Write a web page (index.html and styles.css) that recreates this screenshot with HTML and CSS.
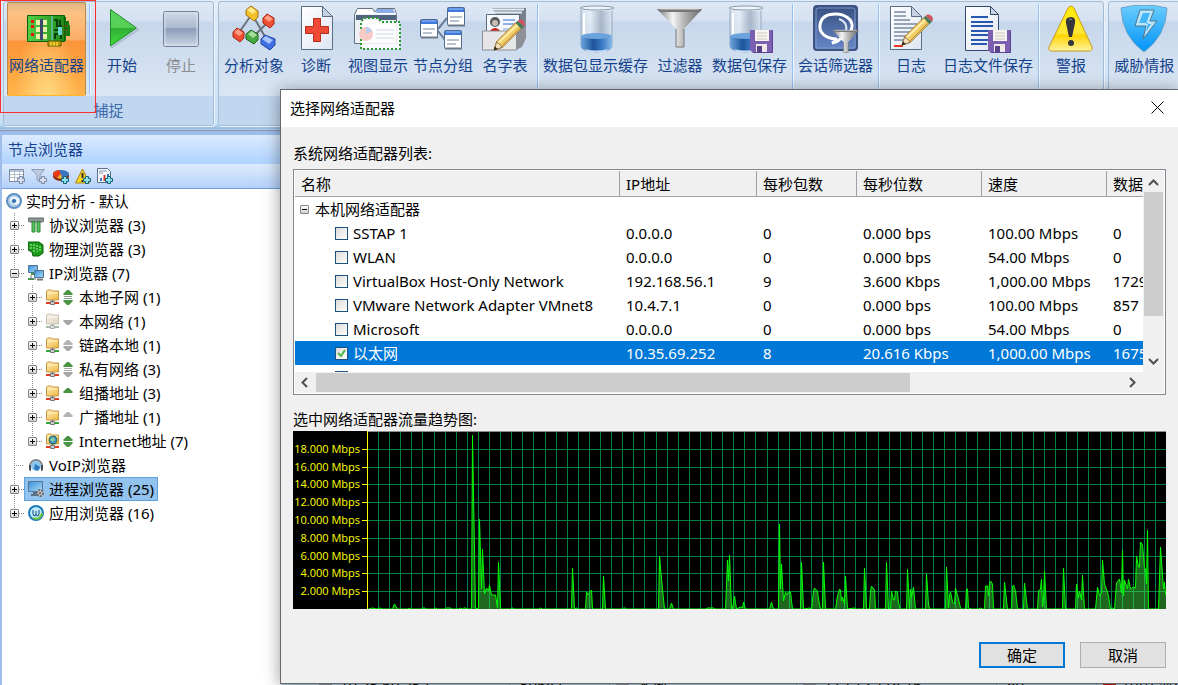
FILE: index.html
```
<!DOCTYPE html>
<html lang="zh-CN">
<head>
    <meta charset="UTF-8">
    <meta name="viewport" content="width=device-width, initial-scale=1.0">
    <title>选择网络适配器</title>
    <link rel="stylesheet" href="styles.css">
</head>
<body>
    <!-- Shared icon shapes -->
    <svg class="defs" aria-hidden="true">
        <defs>
            <linearGradient id="gSteel" x1="0" x2="1"><stop offset="0" stop-color="#777"/><stop offset=".35" stop-color="#f4f4f4"/><stop offset=".6" stop-color="#b5b5b5"/><stop offset="1" stop-color="#666"/></linearGradient>
            <linearGradient id="gGlass" x1="0" x2="1"><stop offset="0" stop-color="#d3dde8"/><stop offset=".3" stop-color="#e8eff7"/><stop offset=".65" stop-color="#97a6b8"/><stop offset="1" stop-color="#dbe7f3"/></linearGradient>
            <linearGradient id="gWater" x1="0" x2="1"><stop offset="0" stop-color="#6da5df"/><stop offset=".4" stop-color="#1d549a"/><stop offset=".7" stop-color="#3d7cc6"/><stop offset="1" stop-color="#8abbe9"/></linearGradient>
            <linearGradient id="gPlay" x1="0" x2="0" y2="1"><stop offset="0" stop-color="#5ad35a"/><stop offset=".5" stop-color="#55d055"/><stop offset=".52" stop-color="#2fae36"/><stop offset="1" stop-color="#43dc3b"/></linearGradient>
            <linearGradient id="gStop" x1="0" x2="0" y2="1"><stop offset="0" stop-color="#d0d9e6"/><stop offset=".45" stop-color="#aebbd0"/><stop offset=".5" stop-color="#8c9cb8"/><stop offset="1" stop-color="#cdd7e6"/></linearGradient>
            <linearGradient id="gPaper" x1="0" x2="1" y2="1"><stop offset="0" stop-color="#fff"/><stop offset="1" stop-color="#dfe6f2"/></linearGradient>
            <linearGradient id="gWarn" x1="0" x2="0" y2="1"><stop offset="0" stop-color="#ffe900"/><stop offset=".6" stop-color="#ffe83a"/><stop offset=".65" stop-color="#ffd500"/><stop offset="1" stop-color="#fff2a0"/></linearGradient>
            <linearGradient id="gShield" x1="0" x2="0" y2="1"><stop offset="0" stop-color="#6bcdfd"/><stop offset="1" stop-color="#0093f8"/></linearGradient>
            <linearGradient id="gTalk" x1="0" x2="0" y2="1"><stop offset="0" stop-color="#39507f"/><stop offset="1" stop-color="#6787c9"/></linearGradient>
            <linearGradient id="gPcb" x1="0" x2="1"><stop offset="0" stop-color="#56cf43"/><stop offset="1" stop-color="#1d8c18"/></linearGradient>
            <linearGradient id="gFold" x1="0" x2="1" y2="1"><stop offset="0" stop-color="#ffeeb0"/><stop offset="1" stop-color="#f0b647"/></linearGradient>
            <linearGradient id="gScreen" x1="0" x2="1" y2="1"><stop offset="0" stop-color="#3a8edb"/><stop offset="1" stop-color="#a8dcf8"/></linearGradient>
        </defs>

        <symbol id="beaker" viewBox="0 0 48 48">
            <path d="M9 5h31v36q0 5-15.500 6Q9 46 9 41z" fill="url(#gGlass)" fill-opacity=".7" stroke="#94a9bd"/>
            <path d="M9 31q15-5 31 0v10q0 5-15.500 6Q9 46 9 41z" fill="url(#gWater)"/>
            <ellipse cx="24.500" cy="31" rx="15" ry="3" fill="#6ba3df"/>
            <path d="M13 44q11 3 23 0l-3 3H16z" fill="#c3dcef"/>
            <path d="M7 2h36l-3 4H10z" fill="#e2ebf3"/>
            <ellipse cx="25" cy="3" rx="17" ry="2" fill="#eef4fa" stroke="#8499ab"/>
            <path d="M12 8v21" stroke="#fff" stroke-width="2"/>
        </symbol>
        <symbol id="funnel" viewBox="0 0 48 48">
            <path d="M1 4h45L28 24v18h-8V24z" fill="url(#gSteel)"/>
            <path d="M1 4h45l-2 3H4z" fill="#777"/>
            <path d="M4 4h39" stroke="#ddd"/>
            <path d="M20 24v18h8V24" fill="none" stroke="#777"/>
        </symbol>
        <symbol id="floppy" viewBox="0 0 24 24">
            <path d="M0 1h23v23H3l-3-3z" fill="#7d5fb2"/>
            <path d="M5 1h14v11H5z" fill="#f7f5f2"/>
            <path d="M7 4h10M7 7h10M7 10h10" stroke="#ccc8bf"/>
            <path d="M6 15h11v9H6z" fill="#ece9e6"/>
            <path d="M7 17h5v6H7z" fill="#594287"/>
            <path d="M22.500 2v21.500H3" fill="none" stroke="#5b4292"/>
        </symbol>
        <symbol id="pencil" viewBox="0 0 36 36">
            <path d="M1 34l3-9L24 5l6 6-20 20z" fill="#f2ce67" stroke="#9b7532"/>
            <path d="M6 26L26 7" stroke="#ffefae" stroke-width="2"/>
            <path d="M9 30l19-19" stroke="#b98938"/>
            <path d="M24 5l2-2 7 6-3 3z" fill="#47795b"/>
            <path d="M26 3q3-3 6 0t1 6z" fill="#cf5460"/>
            <path d="M4 25l6 6-9 3z" fill="#f5dfba" stroke="#8b7045"/>
            <path d="M1 34l1-4 3 3z" fill="#222"/>
        </symbol>
        <symbol id="miniwin" viewBox="0 0 18 20">
            <rect x=".5" y=".5" width="17" height="18" rx="1" fill="#fff" stroke="#50698f"/>
            <path d="M1 1h16v4H1z" fill="#3f79dc"/><path d="M2 2h14" stroke="#9dc2ff"/>
            <path d="M3 10h12M3 14h9" stroke="#7384a0"/><path d="M1 18.500h17" stroke="#6e7987" stroke-width="2"/>
        </symbol>
        <symbol id="plus" viewBox="0 0 8 8">
            <path d="M2.500.5h3v2h2v3h-2v2h-3v-2h-2v-3h2z" fill="#8ce0e8" stroke="#175e78"/>
        </symbol>
        <symbol id="folder" viewBox="0 0 16 16">
            <path d="M1.500 2l1-1h4l1 1h6v9h-12z" fill="url(#gFold)" stroke="#c79743"/>
            <path d="M3 4h10" stroke="#fff4c8"/>
            <path d="M7.500 11v2" stroke="#777" stroke-width="2"/>
            <path d="M1 14h5M9 14h5" stroke="currentColor" stroke-width="2"/>
            <path d="M5.500 12.500h4v3h-4z" fill="#ccc" stroke="#777"/>
        </symbol>
        <symbol id="arrowUp" viewBox="0 0 10 5"><path d="M0 4l4-4h2l4 4-1 1H1z"/></symbol>
        <symbol id="arrowDown" viewBox="0 0 10 5"><path d="M0 1l4 4h2l4-4-1-1H1z"/></symbol>
    </svg>

    <!-- Ribbon -->
    <header class="ribbon">
        <div class="group">
            <div class="tools">
                <button class="tool active">
                    <svg viewBox="0 0 48 48">
                        <path d="M39 12h4v4h3v4h1v11h-4v5h-5z" fill="#107a10"/>
                        <path d="M4.500 10.500h37v26h-37z" fill="url(#gPcb)" stroke="#0b5c0b"/>
                        <path d="M29 11v25" stroke="#7fcdf0"/>
                        <path d="M25 36h13v5H25z" fill="#c59d0c" stroke="#5f5708"/><path d="M28 37v4M31 37v4M34 37v4" stroke="#fff04a"/>
                        <path d="M8 15h3v3H8zm0 5h3v3H8zm0 8h3v3H8z" fill="#e11414"/>
                        <path d="M13 15h11v5H13zm0 7h11v5H13zm0 7h11v5H13z" fill="#e9f0a7"/>
                        <path d="M17 14h3v21h-3z" fill="#3d476b"/>
                        <path d="M31 15h3v6h3v-6M31 25h7v-5M32 34v-5h6v5" fill="none" stroke="#093f0c" stroke-width="2"/>
                        <path d="M35 22h4v8h-4z" fill="#6fd4d4"/><path d="M41 20v12M44 20v9" stroke="#9b3a14" stroke-dasharray="2 2"/>
                    </svg>
                    <span>网络适配器</span>
                </button>
                <span class="sep"></span>
                <button class="tool">
                    <svg viewBox="0 0 48 48">
                        <path d="M13 43L41 24" stroke="#8fa1b5" stroke-width="2" opacity=".5"/>
                        <path d="M12.500 4.500l26 18.500-26 18z" fill="url(#gPlay)" stroke="#218a2b"/>
                    </svg>
                    <span>开始</span>
                </button>
                <button class="tool" disabled>
                    <svg viewBox="0 0 48 48">
                        <rect x="6.500" y="6.500" width="35" height="35" rx="2" fill="url(#gStop)" stroke="#7183a0"/>
                        <rect x="8" y="8" width="32" height="32" fill="none" stroke="#d9e2ee"/>
                    </svg>
                    <span>停止</span>
                </button>
            </div>
            <div class="caption">捕捉</div>
        </div>

        <div class="group">
            <div class="tools">
                <button class="tool">
                    <svg viewBox="0 0 48 48">
                        <path d="M22 9l16 28M38 17L23 32M22 9L8 29" stroke="#68717c" stroke-width="2"/>
                        <path d="M16 5l5-4 7 5v6l-4 4-8-6z" fill="#f3c02b" stroke="#a2730c"/><path d="M17 5l4-3 5 4-3 3z" fill="#ffe98a"/>
                        <path d="M33 13l4-4 7 4v6l-4 4-7-5z" fill="#ed4f33" stroke="#a72515"/><path d="M34 13l4-3 5 4-4 3z" fill="#ff9b83"/>
                        <path d="M3 27l4-4 7 4v6l-4 4-7-5z" fill="#ed4f33" stroke="#a72515"/><path d="M4 27l4-3 5 4-4 3z" fill="#ff9b83"/>
                        <path d="M16 29l5-4 7 4v6l-4 4-8-5z" fill="#48a942" stroke="#1f6423"/><path d="M18 29l4-3 5 4-4 3z" fill="#a8df9c"/>
                        <path d="M31 34l4-4 10 4v6l-5 5-9-6z" fill="#3f6fe0" stroke="#2446a0"/><path d="M32 34l4-3 7 4-4 4z" fill="#a9c4ff"/>
                    </svg>
                    <span>分析对象</span>
                </button>
                <button class="tool">
                    <svg viewBox="0 0 48 48">
                        <path d="M9.500 1.500h21l10 10v33h-31z" fill="url(#gPaper)" stroke="#596d85"/>
                        <path d="M30.500 1.500v10h10z" fill="#c4d2e4" stroke="#596d85"/>
                        <path d="M21.500 13.500h7v8h8v7h-8v8h-7v-8h-8v-7h8z" fill="#ef4a35" stroke="#b72d1f"/>
                    </svg>
                    <span>诊断</span>
                </button>
                <button class="tool">
                    <svg viewBox="0 0 48 48">
                        <path d="M.5 9.500l3-6h15l2 3h1l2-3h17l2 6v29H.5z" fill="#eef1f6" stroke="#66727f"/>
                        <path d="M2 9l2-5h14l2 5zM22 9l2-5h16l2 5z" fill="#fff"/><path d="M23 4h16l2 4H22z" fill="#8caee6"/>
                        <path d="M2 10h40v5H2z" fill="#51647f"/>
                        <path d="M7 44V17l3-4h14l3 4h19v27z" fill="#fff" fill-opacity=".85" stroke="#2b9a2e" stroke-width="2" stroke-dasharray="2 2"/>
                        <circle cx="12" cy="29" r="7" fill="#f6cbc6"/><path d="M12 29v-7a7 7 0 0 1 6 4z" fill="#b9cdf0"/>
                        <path d="M22 25h18M22 29h18M22 33h18" stroke="#cfdae6"/>
                    </svg>
                    <span>视图显示</span>
                </button>
                <button class="tool">
                    <svg viewBox="0 0 48 48">
                        <path d="M19 24l9-11M19 26l7 9" stroke="#6a7d98" stroke-width="2"/>
                        <use href="#miniwin" x="1" y="14" width="18" height="20"/>
                        <use href="#miniwin" x="28" y="2" width="18" height="20"/>
                        <use href="#miniwin" x="25" y="25" width="18" height="20"/>
                    </svg>
                    <span>节点分组</span>
                </button>
                <button class="tool">
                    <svg viewBox="0 0 48 48">
                        <path d="M11 3h34v20l-8 16H33z" fill="#77808b"/>
                        <path d="M9 4.500h34M7 7.500h34" stroke="#e5edf7" stroke-width="2"/>
                        <path d="M5.500 9.500h33v18h-33z" fill="#f5f8fc" stroke="#5f6a78"/>
                        <circle cx="14" cy="17" r="5" fill="#555c60"/><circle cx="14" cy="18" r="3" fill="#c9bdb4"/><path d="M8 27q6-8 12 0z" fill="#c81b10"/>
                        <path d="M22 15h12M22 19h12" stroke="#2e69d8"/><path d="M22 24h11" stroke="#7aa0df"/>
                        <path d="M1.500 26h34v19h-34z" fill="#e6e6e8" stroke="#8e8e93"/><path d="M35 45V27l10-12v18l-4 9z" fill="#8e9097"/>
                        <use href="#pencil" x="12" y="12" width="34" height="36"/>
                    </svg>
                    <span>名字表</span>
                </button>
                <span class="sep"></span>
                <button class="tool">
                    <svg viewBox="0 0 48 48"><use href="#beaker" width="48" height="48"/></svg>
                    <span>数据包显示缓存</span>
                </button>
                <button class="tool">
                    <svg viewBox="0 0 48 48"><use href="#funnel" width="48" height="48"/></svg>
                    <span>过滤器</span>
                </button>
                <button class="tool">
                    <svg viewBox="0 0 48 48">
                        <use href="#beaker" x="-5" width="48" height="48"/>
                        <use href="#floppy" x="24" y="24" width="24" height="24"/>
                    </svg>
                    <span>数据包保存</span>
                </button>
                <span class="sep"></span>
                <button class="tool">
                    <svg viewBox="0 0 48 48">
                        <rect x="2" y="1" width="43" height="44" rx="3" fill="url(#gTalk)" stroke="#3c5380" stroke-width="2"/>
                        <rect x="4" y="3" width="39" height="40" rx="2" fill="none" stroke="#7d97c9"/>
                        <path d="M24 34C13 33 7 28 8 20S16 9 24 9s17 5 16 13-7 11-12 12q-2 3-8 4 4-2 4-4z" fill="none" stroke="#fff" stroke-width="3"/>
                        <path d="M27 14q9 3 7 12" fill="none" stroke="#dce6f5" stroke-width="2"/>
                        <use href="#funnel" x="20" y="23" width="28" height="28"/>
                    </svg>
                    <span>会话筛选器</span>
                </button>
                <span class="sep"></span>
                <button class="tool">
                    <svg viewBox="0 0 48 48">
                        <path d="M3.500 1.500h21l10 10v33h-31z" fill="url(#gPaper)" stroke="#596d85"/>
                        <path d="M24.500 1.500v10h10z" fill="#c4d2e4" stroke="#596d85"/>
                        <path d="M7 7h12M7 11h12M7 15h16M7 19h23M7 23h23M7 27h20M7 31h17M7 35h14" stroke="#98a5b8" stroke-width="2"/>
                        <path d="M7 41h9" stroke="#e8331e" stroke-width="2"/>
                        <use href="#pencil" x="14" y="7" width="34" height="36"/>
                    </svg>
                    <span>日志</span>
                </button>
                <button class="tool">
                    <svg viewBox="0 0 48 48">
                        <path d="M1.500 1.500h25l8 9v35h-33z" fill="url(#gPaper)" stroke="#31496e"/>
                        <path d="M26.500 1.500v8h8z" fill="#c4d2e4" stroke="#31496e"/>
                        <path d="M7 12h17M7 17h22M7 21h22M7 26h22M7 30h20M7 35h17M7 39h16" stroke="#2757b0" stroke-width="2"/>
                        <use href="#floppy" x="24" y="24" width="24" height="24"/>
                    </svg>
                    <span>日志文件保存</span>
                </button>
                <span class="sep"></span>
                <button class="tool">
                    <svg viewBox="0 0 48 48">
                        <path d="M21 3q3-4 6 0l18 39q1 4-3 4H5q-4 0-3-4z" fill="url(#gWarn)" stroke="#c99a1e"/>
                        <path d="M24 12q5 0 4 6l-3 14h-3l-3-14q-1-6 5-6z" fill="#35373c"/>
                        <circle cx="24" cy="38" r="3" fill="#35373c"/><path d="M22 15q2-2 3 0" stroke="#999" fill="none"/>
                    </svg>
                    <span>警报</span>
                </button>
            </div>
            <div class="caption"></div>
        </div>

        <div class="group last">
            <div class="tools">
                <button class="tool">
                    <svg viewBox="0 0 48 48">
                        <path d="M1 3q23-6 46 0-1 28-23 44Q2 31 1 3z" fill="url(#gShield)" stroke="#6ca5c9"/>
                        <path d="M20 5h14l-4 11h7L23 34l3-13h-11z" fill="#b9e6fb" stroke="#50768c"/>
                        <path d="M23 8h7l-4 11h5l-5 8 2-9h-9z" fill="#43b6f8"/>
                    </svg>
                    <span>威胁情报</span>
                </button>
            </div>
            <div class="caption"></div>
        </div>
        <div class="marker"></div>
    </header>

    <main class="workspace">
        <!-- Node explorer -->
        <aside class="explorer">
            <h2>节点浏览器</h2>
            <div class="explorer-tools">
                <button aria-label="添加表">
                    <svg viewBox="0 0 16 16"><path d="M.5 1.500h14v12H.5z" fill="#fff" stroke="#7d8ba3"/><path d="M1 3h13" stroke="#b6c3d8" stroke-width="2"/><path d="M1 6.500h13M1 9.500h13M5.500 2v11M10.500 2v11" stroke="#b3bfd0"/><path d="M10.500 8.500h3v2h2v3h-2v2h-3v-2h-2v-3h2z" fill="#dae1ec" stroke="#7587a6"/></svg>
                </button>
                <button aria-label="添加过滤器">
                    <svg viewBox="0 0 16 16"><path d="M.5 1.500h13L9 7v7l-3-2V7z" fill="#bfcbe0" stroke="#8d9cb7"/><path d="M10.500 8.500h3v2h2v3h-2v2h-3v-2h-2v-3h2z" fill="#dae1ec" stroke="#7587a6"/></svg>
                </button>
                <button aria-label="添加图表">
                    <svg viewBox="0 0 16 16"><path d="M0 6v3q2 4 8 4t8-4V6z" fill="#8f2b12"/><ellipse cx="8" cy="6" rx="8" ry="4" fill="#3c75c2"/><path d="M8 6L4 10Q0 8 0 5.500T6 2z" fill="#e83c18"/><path d="M8 6l-4 4 5 1z" fill="#f5b71b"/><use href="#plus" x="8" y="8" width="8" height="8"/></svg>
                </button>
                <button aria-label="添加警报">
                    <svg viewBox="0 0 16 16"><path d="M7.500 1l7 14H.5z" fill="#f7d41c" stroke="#a98510"/><path d="M7.500 5v5M7.500 12v2" stroke="#333" stroke-width="2"/><use href="#plus" x="8" y="8" width="8" height="8"/></svg>
                </button>
                <button aria-label="添加报表">
                    <svg viewBox="0 0 16 16"><path d="M.5.500h10l3 3v11H.5z" fill="#f5f8fc" stroke="#58708f"/><path d="M2 3h8M2 5h4" stroke="#8494ac"/><path d="M4 13v-3M11 13V6" stroke="#3c75c2" stroke-width="2"/><path d="M7.500 13V7" stroke="#d83b25" stroke-width="2"/><use href="#plus" x="8" y="8" width="8" height="8"/></svg>
                </button>
            </div>

            <nav class="tree">
                <a href="#" class="node root">
                    <svg viewBox="0 0 16 16"><circle cx="8" cy="8" r="7" fill="#cfe1f2" stroke="#5d8fc4" stroke-width="2"/><path d="M4 8a4 4 0 0 1 8 0q0 3-3 2" fill="none" stroke="#fff" stroke-width="2"/><path d="M12 11a5 5 0 1 1 0-6" fill="none" stroke="#8db6de"/><circle cx="8" cy="8" r="2" fill="#2f6dad"/></svg>
                    实时分析 - 默认
                </a>
                <ul>
                    <li>
                        <div class="row"><button class="twist" aria-label="展开"></button><i></i>
                            <a href="#" class="node"><svg viewBox="0 0 16 16"><path d="M0 1h16v3l-2 1H2L0 4z" fill="#8a9690" stroke="#5e6a64"/><path d="M4 5h3v10H4zM9 5h3v10H9z" fill="#5bc35e" stroke="#2b8a38"/></svg>协议浏览器 (3)</a></div>
                    </li>
                    <li>
                        <div class="row"><button class="twist" aria-label="展开"></button><i></i>
                            <a href="#" class="node"><svg viewBox="0 0 16 16"><path d="M0 1h11l4 3v8l-4 3H5l-1-4-4-2z" fill="#1a9c1a" stroke="#086008"/><path d="M3 3v5M6 3v8M9 4v7M12 5v6" stroke="#b7f0a6" stroke-dasharray="2 1"/></svg>物理浏览器 (3)</a></div>
                    </li>
                    <li>
                        <div class="row"><button class="twist open" aria-label="收起"></button><i></i>
                            <a href="#" class="node"><svg viewBox="0 0 16 16"><path d="M.5.500h9v7h-9z" fill="url(#gScreen)" stroke="#54718f"/><path d="M3 9h4M0 14h6" stroke="#3d9d40" stroke-width="2"/><path d="M6.500 5.500h9v7h-9z" fill="url(#gScreen)" stroke="#54718f"/><path d="M9 14.500h6" stroke="#777" stroke-width="2"/><path d="M3 10v4h5" stroke="#777" fill="none"/></svg>IP浏览器 (7)</a></div>
                        <ul>
                            <li><div class="row"><button class="twist" aria-label="展开"></button><i></i>
                                <a href="#" class="node"><svg class="net-red" viewBox="0 0 16 16"><use href="#folder"/></svg><svg class="arrows" viewBox="0 0 12 16"><use href="#arrowUp" x="1" y="1" width="10" height="5" fill="#4a9443"/><path d="M2 7.500h8M2 9.500h8" stroke="#8b9c88"/><use href="#arrowDown" x="1" y="11" width="10" height="5" fill="#4a9443"/></svg>本地子网 (1)</a></div></li>
                            <li><div class="row"><button class="twist" aria-label="展开"></button><i></i>
                                <a href="#" class="node"><svg class="net-green dim" viewBox="0 0 16 16"><use href="#folder"/></svg><svg class="arrows" viewBox="0 0 12 16"><use href="#arrowDown" x="1" y="7" width="10" height="5" fill="#a6a6a6"/></svg>本网络 (1)</a></div></li>
                            <li><div class="row"><button class="twist" aria-label="展开"></button><i></i>
                                <a href="#" class="node"><svg class="net-green" viewBox="0 0 16 16"><use href="#folder"/></svg><svg class="arrows" viewBox="0 0 12 16"><use href="#arrowUp" x="1" y="3" width="10" height="5" fill="#b4b4b4"/><use href="#arrowDown" x="1" y="9" width="10" height="5" fill="#a6a6a6"/></svg>链路本地 (1)</a></div></li>
                            <li><div class="row"><button class="twist" aria-label="展开"></button><i></i>
                                <a href="#" class="node"><svg class="net-red" viewBox="0 0 16 16"><use href="#folder"/></svg><svg class="arrows" viewBox="0 0 12 16"><use href="#arrowUp" x="1" y="1" width="10" height="5" fill="#4a9443"/><path d="M2 7.500h8M2 9.500h8" stroke="#aaa"/><use href="#arrowDown" x="1" y="11" width="10" height="5" fill="#a6a6a6"/></svg>私有网络 (3)</a></div></li>
                            <li><div class="row"><button class="twist" aria-label="展开"></button><i></i>
                                <a href="#" class="node"><svg class="net-red" viewBox="0 0 16 16"><use href="#folder"/></svg><svg class="arrows" viewBox="0 0 12 16"><use href="#arrowUp" x="1" y="3" width="10" height="5" fill="#4a9443"/></svg>组播地址 (3)</a></div></li>
                            <li><div class="row"><button class="twist" aria-label="展开"></button><i></i>
                                <a href="#" class="node"><svg class="net-green" viewBox="0 0 16 16"><use href="#folder"/></svg><svg class="arrows" viewBox="0 0 12 16"><use href="#arrowUp" x="1" y="3" width="10" height="5" fill="#b4b4b4"/></svg>广播地址 (1)</a></div></li>
                            <li><div class="row"><button class="twist" aria-label="展开"></button><i></i>
                                <a href="#" class="node"><svg class="net-red" viewBox="0 0 16 16"><use href="#folder"/><circle cx="8" cy="7" r="4" fill="#3f8fd6" stroke="#356c47"/><path d="M5 7l3-3 2 3-2 2z" fill="#8ed18b"/></svg><svg class="arrows" viewBox="0 0 12 16"><use href="#arrowUp" x="1" y="3" width="10" height="5" fill="#4a9443"/><use href="#arrowDown" x="1" y="9" width="10" height="5" fill="#4a9443"/></svg>Internet地址 (7)</a></div></li>
                        </ul>
                    </li>
                    <li>
                        <div class="row leaf"><i></i>
                            <a href="#" class="node"><svg viewBox="0 0 16 16"><path d="M2 9a6 6 0 0 1 12 0" fill="none" stroke="#7d858e" stroke-width="2"/><circle cx="8" cy="9" r="5" fill="#8cc4ec"/><path d="M7 7l5 3-2 4-4-2z" fill="#2d78bb"/><path d="M1 8h2v6H2L1 12zM13 8h2v4l-1 2h-1z" fill="#444b52"/></svg>VoIP浏览器</a></div>
                    </li>
                    <li>
                        <div class="row"><button class="twist" aria-label="展开"></button><i></i>
                            <a href="#" class="node selected"><svg viewBox="0 0 16 16"><path d="M.5.500h14v10H.5z" fill="url(#gScreen)" stroke="#577799"/><path d="M5 12h5M3 14h6" stroke="#5a6f86" stroke-width="2"/><circle cx="12" cy="12" r="3" fill="#c7c7c7" stroke="#6c6c6c" stroke-width="2" stroke-dasharray="2 1"/><circle cx="12" cy="12" r="1" fill="#555"/></svg>进程浏览器 (25)</a></div>
                    </li>
                    <li>
                        <div class="row"><button class="twist" aria-label="展开"></button><i></i>
                            <a href="#" class="node"><svg viewBox="0 0 16 16"><circle cx="8" cy="8" r="7" fill="#bce9f8" stroke="#1f79b8" stroke-width="2"/><path d="M14 8a6 6 0 0 1-9 5" fill="none" stroke="#6cc437" stroke-width="2"/><path d="M5 5v4l1 2 2-1 2 1 1-2V5M8 6v4" fill="none" stroke="#134b80"/></svg>应用浏览器 (16)</a></div>
                    </li>
                </ul>
            </nav>
        </aside>

        <!-- Session list, mostly under the dialog -->
        <section class="sessions">
            <div class="session"><span class="mark host">10.35.69.252</span><span>50687</span><span class="mark">本地</span><span class="mark">112.13.118.16</span><span>80</span><span class="mark flag">中国,浙江</span></div>
        </section>
    </main>

    <!-- Adapter dialog -->
    <div class="dialog" role="dialog" aria-labelledby="dialogTitle">
        <div class="titlebar">
            <h1 id="dialogTitle">选择网络适配器</h1>
            <button class="close" aria-label="关闭"><svg viewBox="0 0 13 13"><path d="M.5.500l12 12M12.500.500l-12 12" stroke="#000"/></svg></button>
        </div>
        <div class="dialog-body">
            <h3 id="listLabel">系统网络适配器列表:</h3>
            <div class="listbox">
                <div class="view">
                    <table aria-labelledby="listLabel">
                        <colgroup><col class="c-name"><col class="c-ip"><col class="c-pkt"><col class="c-bit"><col class="c-speed"><col class="c-data"></colgroup>
                        <thead>
                            <tr><th>名称</th><th>IP地址</th><th>每秒包数</th><th>每秒位数</th><th>速度</th><th>数据包</th></tr>
                        </thead>
                        <tbody>
                            <tr><td class="parent" colspan="6"><button class="twist open" aria-label="收起"></button>本机网络适配器</td></tr>
                            <tr><td><label><input type="checkbox">SSTAP 1</label></td><td>0.0.0.0</td><td>0</td><td>0.000 bps</td><td>100.00 Mbps</td><td>0</td></tr>
                            <tr><td><label><input type="checkbox">WLAN</label></td><td>0.0.0.0</td><td>0</td><td>0.000 bps</td><td>54.00 Mbps</td><td>0</td></tr>
                            <tr><td><label><input type="checkbox">VirtualBox Host-Only Network</label></td><td>192.168.56.1</td><td>9</td><td>3.600 Kbps</td><td>1,000.00 Mbps</td><td>1729</td></tr>
                            <tr><td><label><input type="checkbox">VMware Network Adapter VMnet8</label></td><td>10.4.7.1</td><td>0</td><td>0.000 bps</td><td>100.00 Mbps</td><td>857</td></tr>
                            <tr><td><label><input type="checkbox">Microsoft</label></td><td>0.0.0.0</td><td>0</td><td>0.000 bps</td><td>54.00 Mbps</td><td>0</td></tr>
                            <tr class="current"><td><label><input type="checkbox" checked>以太网</label></td><td>10.35.69.252</td><td>8</td><td>20.616 Kbps</td><td>1,000.00 Mbps</td><td>1675</td></tr>
                            <tr><td><label><input type="checkbox">Microsoft</label></td><td>0.0.0.0</td><td>0</td><td>0.000 bps</td><td>54.00 Mbps</td><td>0</td></tr>
                        </tbody>
                    </table>
                </div>
                <div class="vscroll">
                    <svg viewBox="0 0 19 20"><path d="M5 13l4.500-4.500L14 13" fill="none" stroke="#505050" stroke-width="2"/></svg>
                    <span></span>
                    <svg viewBox="0 0 19 20"><path d="M5 7l4.500 4.500L14 7" fill="none" stroke="#505050" stroke-width="2"/></svg>
                </div>
                <div class="hscroll">
                    <svg viewBox="0 0 21 19"><path d="M12 5L7.500 9.500 12 14" fill="none" stroke="#505050" stroke-width="2"/></svg>
                    <span></span>
                    <svg viewBox="0 0 21 19"><path d="M8 5l4.500 4.500L8 14" fill="none" stroke="#505050" stroke-width="2"/></svg>
                </div>
            </div>

            <h3>选中网络适配器流量趋势图:</h3>
            <div class="chart">
                <svg class="axis" id="axis" viewBox="0 0 75 178"></svg>
                <svg class="plot" id="plot" viewBox="0 0 798 178" preserveAspectRatio="none"></svg>
            </div>

            <div class="actions">
                <button class="ok">确定</button>
                <button>取消</button>
            </div>
        </div>
    </div>

    <script>
        const svgNS = 'http://www.w3.org/2000/svg';
        const height = 178;
        const rowY = [18, 36, 53, 71, 89, 107, 125, 142, 160];

        // traffic samples: x, height
        const samples = [
            0,0, 4,1, 8,0, 11,1, 14,0, 24,0, 26,5, 29,0, 39,0, 41,1, 42,0, 53,0, 54,1, 56,1, 58,0, 65,0, 67,1, 69,0, 76,0, 78,1, 82,1, 84,0, 90,0, 92,1, 94,0, 95,1, 97,1, 99,0,
            103,0, 104,174, 107,0, 108,1, 110,0, 111,90, 113,20, 114,60, 116,15, 118,21, 120,18, 121,24, 123,14, 127,14, 129,1, 130,47, 132,0,
            142,0, 144,1, 146,0, 170,0, 172,1, 174,0, 203,0, 204,41, 206,0, 208,1, 210,0, 217,0, 218,17, 220,14, 221,17, 223,19, 224,0,
            234,0, 235,33, 237,0, 254,0, 255,1, 257,1, 258,0, 290,0, 291,53, 293,30, 294,20, 296,0, 301,0, 303,6, 305,0, 337,0, 339,1, 345,1, 347,0,
            357,0, 359,49, 360,28, 361,54, 363,0, 364,0, 366,13, 368,0, 372,2, 374,1, 375,7, 377,0, 401,0, 403,7, 405,0,
            410,0, 411,85, 412,20, 413,45, 415,8, 417,17, 418,14, 420,17, 422,17, 424,0, 432,0, 433,47, 435,0,
            441,1, 443,0, 445,18, 446,21, 449,18, 450,10, 452,0, 454,0, 455,47, 457,0, 467,0, 469,13, 471,20, 472,19, 473,8, 474,12, 476,5, 477,33, 479,0,
            486,1, 488,0, 495,0, 496,41, 498,0, 501,0, 502,18, 503,23, 506,19, 507,0, 517,0, 518,47, 520,0,
            522,0, 523,18, 525,9, 526,9, 527,18, 529,17, 530,6, 532,0, 538,0, 539,40, 541,0, 542,20, 543,12, 545,22, 547,0, 557,0, 558,35, 560,5, 561,0,
            577,0, 578,42, 580,1, 581,14, 582,17, 584,7, 586,5, 587,21, 590,10, 592,1, 593,0, 597,0, 598,20, 599,20, 600,1, 603,0, 610,0, 612,1, 614,0,
            616,0, 617,23, 619,23, 620,13, 621,26, 622,28, 624,25, 625,0, 635,0, 636,27, 639,0, 643,0, 644,22, 645,24, 647,18, 649,0, 655,0, 656,26, 659,0,
            669,0, 670,18, 672,20, 673,30, 674,2, 675,10, 676,38, 678,0, 694,0, 695,41, 697,0, 707,0, 708,25, 710,11, 711,18, 713,9, 714,34, 716,0,
            727,0, 729,22, 731,13, 733,16, 734,49, 736,25, 739,17, 740,13, 742,0, 744,1, 746,0, 748,26, 751,30, 753,16, 754,59, 755,13, 756,29, 759,20, 760,30, 762,20,
            765,22, 767,21, 768,53, 770,42, 771,42, 772,67, 774,64, 776,41, 777,40, 778,25, 779,79, 780,0, 790,0, 792,62, 795,20, 796,27, 797,15, 798,13
        ];

        function add(parent, tag, attrs, text) {
            const el = document.createElementNS(svgNS, tag);
            for (const key in attrs) el.setAttribute(key, attrs[key]);
            if (text) el.textContent = text;
            parent.appendChild(el);
        }

        // Axis labels
        const axis = document.getElementById('axis');
        rowY.forEach((y, i) => {
            add(axis, 'text', { x: 67, y: y + 4, class: 'axis-label' }, `${18 - i * 2}.000 Mbps`);
            add(axis, 'rect', { x: 69, y: y, width: 5, height: 1, class: 'axis-line' });
        });
        add(axis, 'rect', { x: 74, y: 0, width: 1, height: height, class: 'axis-line' });

        // Grid
        const plot = document.getElementById('plot');
        rowY.forEach(y => add(plot, 'rect', { x: 0, y: y, width: 798, height: 1, class: 'grid' }));
        for (let i = 0; i <= 70; i++) {
            add(plot, 'rect', { x: Math.round(10 + i * 11.1), y: 0, width: 1, height: height, class: 'grid' });
        }
        add(plot, 'rect', { x: 0, y: 0, width: 798, height: 1, class: 'plot-top' });

        // Traffic
        let points = '';
        for (let i = 0; i < samples.length; i += 2) {
            points += `${samples[i] + 0.5},${height - samples[i + 1]} `;
        }
        add(plot, 'polygon', { points: `0,178 ${points} 798,178`, class: 'area' });
        add(plot, 'polyline', { points: points, class: 'line' });
    </script>
</body>
</html>
```
FILE: styles.css
```
* {
    box-sizing: border-box;
    margin: 0;
    padding: 0;
}

html, body {
    height: 100%;
}

body {
    display: flex;
    flex-direction: column;
    position: relative;
    overflow: hidden;
    background: #9fbdeb;
    font-family: "Noto Sans", "Noto Sans CJK SC", sans-serif;
    font-size: 15px;
    line-height: 24px;
    color: #000;
}

button {
    border: none;
    background: none;
    font: inherit;
    color: inherit;
}

a {
    color: inherit;
    text-decoration: none;
}

svg {
    display: block;
    flex: none;
}

.defs {
    position: absolute;
    width: 0;
    height: 0;
}

/* Ribbon */
.ribbon {
    display: flex;
    flex: none;
    gap: 4px;
    height: 130px;
    padding: 1px 0 3px 3px;
    position: relative;
    overflow: hidden;
    background: linear-gradient(#e3edf8, #d3e4f6 70%, #c8e0f4 96%, #8fb6dc);
    border-bottom: 1px solid #b6cdea;
}

.group {
    display: flex;
    flex-direction: column;
    flex: none;
    border: 1px solid #a3bcd8;
    border-radius: 3px;
    background: linear-gradient(#dee8f5 0, #d5e1f1 19px, #c7d7eb 20px, #d9e6f4 94px);
    box-shadow: 1px 1px 0 #eaf3fc;
}

.group.last {
    flex: 1 0 auto;
}

.tools {
    display: flex;
    gap: 1px;
    height: 94px;
    padding: 0 3px;
}

.tool {
    display: flex;
    flex-direction: column;
    align-items: center;
    min-width: 58px;
    padding: 3px 2px 0;
    color: #15428b;
    white-space: nowrap;
}

.tool svg {
    width: 48px;
    height: 48px;
}

.tool.active {
    background: radial-gradient(ellipse at 50% 110%, #ffdb83 0, rgba(255, 196, 84, 0) 60%), linear-gradient(#e0b484 0, #fcc283 10px, #fbae66 37px, #fb9438 38px, #ffb34a 100%);
    border: 1px solid #b88b4d;
    border-bottom-color: #ffb42a;
    padding: 2px 1px 0;
    border-radius: 2px;
}

.tool:disabled {
    color: #8d8d8d;
}

.sep {
    width: 2px;
    margin: 2px 1px 2px 2px;
    background: linear-gradient(to right, #95bff5 50%, #f1f7ff 50%);
}

.caption {
    flex: 1;
    text-align: center;
    background: #c1d7f0;
    color: #3e6aaa;
    line-height: 28px;
    border-radius: 0 0 3px 3px;
}

/* red frame drawn over the adapter button */
.marker {
    position: absolute;
    left: 0;
    top: 0;
    width: 96px;
    height: 113px;
    border: 1px solid #ff2d2d;
}

/* Node explorer */
.workspace {
    display: flex;
    flex: 1;
    min-height: 0;
    border-top: 1px solid #8499b8;
    padding: 4px 0 0 2px;
}

.explorer {
    flex: none;
    width: 279px;
    background: #fff;
}

.explorer h2 {
    height: 29px;
    padding-left: 6px;
    background: linear-gradient(#dcebff, #aed2ff);
    color: #15428b;
    font-size: 15px;
    font-weight: normal;
    line-height: 29px;
}

.explorer-tools {
    display: flex;
    align-items: center;
    gap: 6px;
    height: 25px;
    padding-left: 7px;
    background: linear-gradient(#deebfd, #b4d1fa);
    border-bottom: 1px solid #6f9ddb;
}

.explorer-tools svg,
.node svg {
    width: 16px;
    height: 16px;
}

.tree ul {
    list-style: none;
    background: repeating-linear-gradient(#8c8c80 0 1px, transparent 1px 2px) 12px 0 / 1px calc(100% - 12px) no-repeat;
}

.tree ul ul {
    margin-left: 18px;
}

.row {
    display: flex;
    align-items: center;
    height: 24px;
    padding-left: 8px;
}

.row i {
    width: 5px;
    height: 1px;
    background: repeating-linear-gradient(to right, #8c8c80 0 1px, transparent 1px 2px);
}

.row.leaf i {
    width: 10px;
    margin-left: 4px;
}

.twist {
    flex: none;
    width: 9px;
    height: 9px;
    border: 1px solid #848484;
    border-radius: 1px;
    background:
        linear-gradient(#000, #000) center / 5px 1px no-repeat,
        linear-gradient(#000, #000) center / 1px 5px no-repeat,
        linear-gradient(#fff, #d2d2d2);
}

.twist.open {
    background:
        linear-gradient(#000, #000) center / 5px 1px no-repeat,
        linear-gradient(#fff, #d2d2d2);
}

.node {
    display: flex;
    align-items: center;
    gap: 5px;
    height: 24px;
    padding: 0 3px;
    border: 1px solid transparent;
    white-space: nowrap;
}

.node.root {
    gap: 4px;
}

.tree ul ul .node {
    padding: 0 2px;
}

.node .arrows {
    width: 12px;
    margin-left: -4px;
}

.node.selected {
    background: #91c3ee;
    border-color: #5fa3dd;
}

.net-red {
    color: #e23b1f;
}

.net-green {
    color: #35a53c;
}

.dim {
    filter: grayscale(0.7);
    opacity: 0.6;
}

/* Session list */
.sessions {
    display: flex;
    flex: 1;
    flex-direction: column;
    justify-content: flex-end;
    overflow: hidden;
    background: #fff;
}

.session {
    display: grid;
    grid-template-columns: 229px 100px 187px 200px 100px 1fr;
    height: 12px;
    background: #b9d8ec;
}

.session span {
    display: flex;
    gap: 8px;
    padding-left: 10px;
    border-right: 1px solid #93b2c9;
    white-space: nowrap;
}

.session .mark {
    padding-left: 6px;
}

.session .mark::before {
    content: "";
    width: 13px;
    height: 12px;
    background: #8f9dab;
}

.session .host {
    padding-left: 38px;
}

.session .flag::before {
    background: #c8200f;
}

/* Dialog */
.dialog {
    display: flex;
    flex-direction: column;
    position: absolute;
    top: 89px;
    right: 0;
    bottom: 1px;
    left: 280px;
    background: #f0f0f0;
    border: 1px solid #66686c;
    border-right: none;
    box-shadow: 0 2px 16px rgba(0, 0, 0, 0.4);
}

.titlebar {
    display: flex;
    align-items: center;
    justify-content: space-between;
    flex: none;
    height: 37px;
    padding: 0 14px 2px 9px;
    background: #fff;
}

.titlebar h1,
.dialog-body h3 {
    font-size: 15px;
    font-weight: normal;
}

.close svg {
    width: 13px;
    height: 13px;
}

.dialog-body {
    display: flex;
    flex: 1;
    flex-direction: column;
    padding: 14px 12px 15px;
}

.listbox {
    display: grid;
    grid-template-columns: 1fr 21px;
    grid-template-rows: 201px 21px;
    margin: 4px 0 12px;
    padding: 1px;
    border: 1px solid #828790;
    background: #f0f0f0;
    outline: 1px solid #fff;
    outline-offset: -2px;
}

.view {
    overflow: hidden;
    background: #fff;
}

table {
    width: 938px;
    border-collapse: separate;
    border-spacing: 0;
    table-layout: fixed;
}

.c-name { width: 325px; }
.c-ip { width: 137px; }
.c-pkt { width: 100px; }
.c-bit { width: 125px; }
.c-speed { width: 125px; }
.c-data { width: 126px; }

th {
    height: 26px;
    padding-left: 6px;
    background: #f0f0f0;
    border-right: 1px solid #a0a0a0;
    border-bottom: 1px solid #a0a0a0;
    font-weight: normal;
    text-align: left;
}

td {
    height: 24px;
    padding-left: 6px;
    white-space: nowrap;
}

td:first-child {
    padding-left: 40px;
}

td.parent:first-child {
    padding-left: 5px;
}

td .twist {
    margin-right: 6px;
    vertical-align: 2px;
}

td label {
    display: flex;
    align-items: center;
    gap: 5px;
    height: 24px;
}

td input {
    appearance: none;
    width: 13px;
    height: 13px;
    border: 1px solid #1c5180;
    background: linear-gradient(135deg, #dcdcd7, #fff);
}

td input:checked {
    background: url("data:image/svg+xml,%3Csvg xmlns='http://www.w3.org/2000/svg' viewBox='0 0 11 11'%3E%3Cpath d='M2 5l3 3 4-6' fill='none' stroke='%234fb848' stroke-width='2'/%3E%3C/svg%3E"), linear-gradient(135deg, #dcdcd7, #fff);
}

.current {
    background: #0078d7;
    color: #fff;
}

.vscroll {
    display: flex;
    flex-direction: column;
    padding: 1px 1px 0;
}

.vscroll span {
    width: 19px;
    height: 124px;
    margin-bottom: auto;
    background: #cdcdcd;
}

.vscroll svg {
    width: 19px;
    height: 20px;
}

.hscroll {
    display: flex;
    padding-top: 1px;
}

.hscroll span {
    width: 70%;
    height: 19px;
    margin-right: auto;
    background: #cdcdcd;
}

.hscroll svg {
    width: 21px;
    height: 19px;
}

/* Traffic chart */
.chart {
    display: flex;
    flex: none;
    background: #000;
}

.axis {
    width: 75px;
    height: 178px;
}

.plot {
    flex: 1;
    min-width: 0;
    height: 178px;
}

.axis-label {
    fill: #ffff00;
    font-family: "Open Sans", sans-serif;
    font-size: 11px;
    text-anchor: end;
}

.axis-line {
    fill: #ffff00;
}

.grid {
    fill: #007f42;
}

.plot-top {
    fill: #8c8c8c;
}

.area {
    fill: #4dff4d;
    fill-opacity: 0.4;
}

.line {
    fill: none;
    stroke: #00ff00;
    stroke-width: 1;
}

.actions {
    display: flex;
    justify-content: flex-end;
    gap: 15px;
    margin-top: auto;
}

.actions button {
    width: 86px;
    height: 26px;
    border: 1px solid #adadad;
    background: #e1e1e1;
    line-height: 22px;
}

.actions .ok {
    border: 2px solid #0078d7;
}
```
